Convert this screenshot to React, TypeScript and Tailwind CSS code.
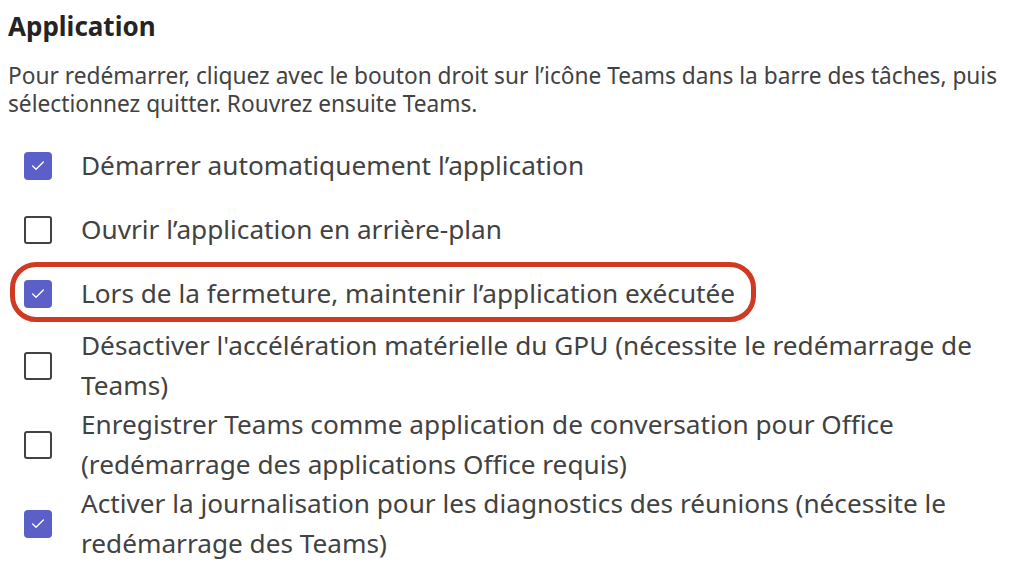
import { Check } from 'lucide-react';

type Option = {
  label: string;
  checked: boolean;
  highlighted?: boolean;
};

const options: Option[] = [
  { label: 'Démarrer automatiquement l’application', checked: true },
  { label: 'Ouvrir l’application en arrière-plan', checked: false },
  { label: 'Lors de la fermeture, maintenir l’application exécutée', checked: true, highlighted: true },
  { label: "Désactiver l'accélération matérielle du GPU (nécessite le redémarrage de Teams)", checked: false },
  { label: 'Enregistrer Teams comme application de conversation pour Office (redémarrage des applications Office requis)', checked: false },
  { label: 'Activer la journalisation pour les diagnostics des réunions (nécessite le redémarrage des Teams)', checked: true },
];

function Checkbox({ checked }: { checked: boolean }) {
  if (checked) {
    return (
      <span className="flex h-[28px] w-[28px] shrink-0 items-center justify-center rounded-[4px] bg-[#5b5fc7]">
        <Check size={16} strokeWidth={2} className="text-white" />
      </span>
    );
  }
  return <span className="h-[28px] w-[28px] shrink-0 rounded-[3px] border-2 border-[#424242] bg-white" />;
}

export default function App() {
  return (
    <div className="h-[582px] w-[1032px] overflow-hidden bg-white pl-2 pt-[8px] font-['Segoe_UI','Noto_Sans',sans-serif]">
      <h2 className="text-[26px] font-bold leading-[36px] text-[#242424]">Application</h2>
      <p className="mt-[18px] w-[1000px] text-[22.7px] leading-[28px] text-[#424242]">
        Pour redémarrer, cliquez avec le bouton droit sur l’icône Teams dans la barre des tâches, puis sélectionnez quitter. Rouvrez ensuite Teams.
      </p>
      <ul className="mt-[16px] flex flex-col">
        {options.map((opt) => (
          <li key={opt.label} className="relative flex min-h-[64px] items-center gap-[29px] pl-4">
            {opt.highlighted && (
              <span className="pointer-events-none absolute left-[2px] top-0 h-[60px] w-[746px] rounded-[26px] border-[5px] border-[#d13a22]" />
            )}
            <Checkbox checked={opt.checked} />
            <span className="w-[905px] text-[26.2px] leading-[39.5px] text-[#424242]">{opt.label}</span>
          </li>
        ))}
      </ul>
    </div>
  );
}
